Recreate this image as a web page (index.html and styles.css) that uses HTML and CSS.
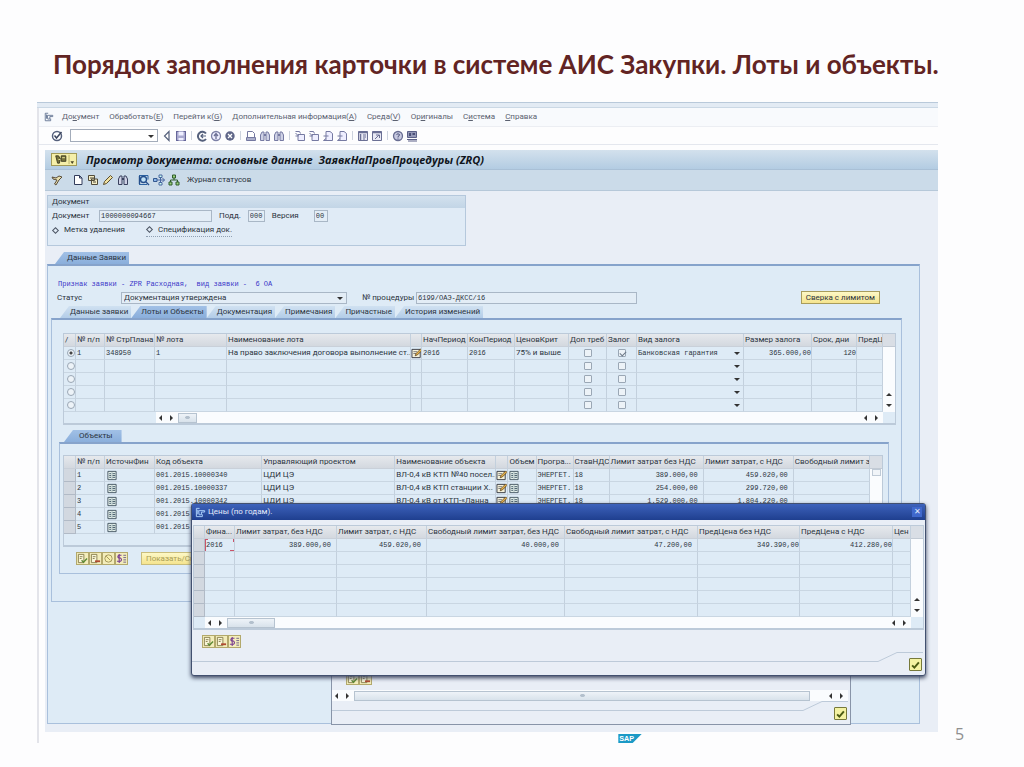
FILE: index.html
```html
<!DOCTYPE html>
<html lang="ru">
<head>
<meta charset="utf-8">
<meta name="viewport" content="width=device-width, initial-scale=1">
<title>Порядок заполнения карточки в системе АИС Закупки</title>
<link rel="stylesheet" href="styles.css">
</head>
<body>
<svg class="sprite" aria-hidden="true">
  <symbol id="i-menu" viewBox="0 0 12 12"><path d="M5 1.500H1.500V10.500H8V8M4 4h6.500v1.500H7v3H4.500zM3 3v5" fill="none" stroke="#596b8c"/></symbol>
  <symbol id="i-ok" viewBox="0 0 12 12"><circle cx="6" cy="6" r="4.500" fill="#fff" stroke="#55607c" stroke-width="1.500"/><path d="M3.500 5.500l2 2.500L10.500 2" fill="none" stroke="#3c4660" stroke-width="1.500"/></symbol>
  <symbol id="i-back" viewBox="0 0 12 12"><path d="M8 1.500v9L3.500 6z" fill="#fff" stroke="#55607c" stroke-width="1.200"/></symbol>
  <symbol id="i-save" viewBox="0 0 12 12"><rect x="1.500" y="1.500" width="9" height="9" fill="#a9a9cf" stroke="#66669a"/><path d="M3.500 1.500h5v4h-5zM3.500 8h5v2.500h-5z" fill="#eef"/></symbol>
  <symbol id="i-c1" viewBox="0 0 12 12"><path d="M10 3.500A4.500 4.500 0 1 0 10 9" fill="none" stroke="#55607c" stroke-width="2"/><path d="M5 6h5M7 4L5 6l2 2" fill="none" stroke="#55607c" stroke-width="1.200"/></symbol>
  <symbol id="i-c2" viewBox="0 0 12 12"><circle cx="6" cy="6" r="4.500" fill="#eef" stroke="#7c80a6" stroke-width="1.300"/><path d="M6 9V4M4 6l2-2.500L8 6" fill="none" stroke="#6c7094" stroke-width="1.300"/></symbol>
  <symbol id="i-c3" viewBox="0 0 12 12"><circle cx="6" cy="6" r="4.700" fill="#5f6688"/><path d="M4 4l4 4M8 4L4 8" stroke="#fff" stroke-width="1.300"/></symbol>
  <symbol id="i-print" viewBox="0 0 12 12"><path d="M2.500 7V1.500h5l2 2V7" fill="#fff" stroke="#7478a0"/><path d="M1.500 7.500h9v3h-9z" fill="#aaaeca" stroke="#7478a0"/></symbol>
  <symbol id="i-find" viewBox="0 0 12 12"><path d="M1.500 10.500V5l1.500-3h2v8.500zM7 10.500V2h2L10.500 5v5.500z" fill="#cfd2e6" stroke="currentColor"/><path d="M5 5h2" stroke="currentColor" stroke-width="2"/></symbol>
  <symbol id="i-pg1" viewBox="0 0 12 12"><path d="M4 4.500h6.500v6H4zM1.500 1.500h4l1 2M1.500 3l3 3M1.500 6h3" fill="#eef" stroke="#767aa2"/></symbol>
  <symbol id="i-pg2" viewBox="0 0 12 12"><path d="M4 1.500h4l2.500 2v7H4zM1.500 6h5M4 8.500L1.500 10.500h5" fill="#eef" stroke="#767aa2"/></symbol>
  <symbol id="i-win" viewBox="0 0 12 12"><path d="M1.500 1.500h9v9h-9z" fill="#e8e9f4" stroke="#6a6f94"/><path d="M1 2.500h10M3.500 4v6" stroke="#6a6f94" stroke-width="1.500"/><path d="M6 5h3M6 7h3M6 9h2" stroke="#6a6f94"/></symbol>
  <symbol id="i-win2" viewBox="0 0 12 12"><path d="M1.500 1.500h9v9h-9z" fill="#e8e9f4" stroke="#6a6f94"/><path d="M1 2.500h10" stroke="#6a6f94" stroke-width="1.500"/><path d="M4 9l4-4M5 5h3.500v3" fill="none" stroke="#6a6f94"/></symbol>
  <symbol id="i-help" viewBox="0 0 12 12"><circle cx="6" cy="6" r="4.500" fill="#c7c9e0" stroke="#686d92" stroke-width="1.300"/><path d="M4.500 4.500q1.500-1.500 3 0Q7.500 6 6 6.500v1M6 8.500v1" fill="none" stroke="#4b5078"/></symbol>
  <symbol id="i-mon" viewBox="0 0 12 12"><path d="M1.500 1.500h9v6h-9z" fill="#9599b8" stroke="#5c6188"/><path d="M3 3h2v3H3zM6.500 3h2.500v2H6.500z" fill="#4b5078"/><path d="M1 9.500h10M2 11h9" stroke="#5c6188" stroke-width="1.200"/></symbol>
  <symbol id="i-tool" viewBox="0 0 12 12"><path d="M1 3l4 1 3-2 3 1-3 3-3 5-1.500-1L6 6 2 5z" fill="#e7dfae" stroke="#5a4d3a"/></symbol>
  <symbol id="i-new" viewBox="0 0 12 12"><path d="M2.500 1.500h5l2.500 2.500v6.500H2.500zM7.500 1.500V4H10" fill="#fff" stroke="#333d5c"/></symbol>
  <symbol id="i-copy" viewBox="0 0 12 12"><path d="M1.500 1.500h6v5h-6zM4.500 5h6v5.500h-6z" fill="#f4edc6" stroke="#514b3a"/><path d="M3 4h5M6 8h3" stroke="#514b3a"/></symbol>
  <symbol id="i-pen" viewBox="0 0 12 12"><path d="M1.500 10.500l1-3L8.500 1.500l2 2L4.500 9.500z" fill="#efe0a0" stroke="#5b4d2c"/></symbol>
  <symbol id="i-zoom" viewBox="0 0 12 12"><path d="M1 1.500h9v4M1 10.500h8" fill="none" stroke="#2c62a0"/><circle cx="5.500" cy="5.500" r="3" fill="#bfe0f4" stroke="#254f8c" stroke-width="1.400"/><path d="M8 8l3 3M1.500 2v8" stroke="#254f8c" stroke-width="1.400"/></symbol>
  <symbol id="i-flow" viewBox="0 0 12 12"><path d="M.5 4.500h3.500v3H.5z" fill="#8db7ea" stroke="#34588f"/><path d="M6 1h3v2.500H6zM6 8.500h3V11H6z" fill="#cfe" stroke="#4867a0"/><path d="M4 6h7.500M9.500 4l2 2-2 2M7.500 3.500v5" fill="none" stroke="#4867a0"/></symbol>
  <symbol id="i-tree" viewBox="0 0 12 12"><path d="M4.500 1h3v3h-3zM1 8h3v3H1zM8 8h3v3H8z" fill="#9bd07b" stroke="#2f5d2c"/><path d="M6 4v2M2.500 8V6h7v2" fill="none" stroke="#2f5d2c"/></symbol>
  <symbol id="i-obj" viewBox="0 0 24 12"><path d="M3 2h3l2 3-1 5H5zM9 2h5v6H9z" fill="#76723a" stroke="#3b3a22"/><path d="M10 4h3M6 6h2" stroke="#eee9a0"/><path d="M17.500 1v10" stroke="#b5ac62"/><path d="M19 8h4l-2 3z" fill="#4a4527"/></symbol>
  <symbol id="i-edit" viewBox="0 0 12 12"><path d="M.5 1.500h9v9h-9z" fill="#f5f2dc" stroke="#33373f"/><path d="M2 4h4M2 6h3" stroke="#777"/><path d="M4 8.500l1-2.500 5-5 1.500 1.500-5 5z" fill="#e8b34a" stroke="#4f3a1b" stroke-width=".8"/></symbol>
  <symbol id="i-list" viewBox="0 0 12 12"><path d="M1.500 1.500h9v9h-9z" fill="#e3efea" stroke="#43535f"/><path d="M3 4h2M3 6h2M3 8h2M6.500 4h3M6.500 6h3M6.500 8h3" stroke="#3f5666"/><path d="M6 2v8" stroke="#879aa3" stroke-width=".6"/></symbol>
  <symbol id="i-b1" viewBox="0 0 12 12"><path d="M1.500 1.500h6v9h-6z" fill="#f9f6d8" stroke="#857d4d"/><path d="M3 4h3M3 6h2" stroke="#857d4d"/><path d="M5 8l2 2 4-4" fill="none" stroke="#5c8a34" stroke-width="1.500"/></symbol>
  <symbol id="i-b2" viewBox="0 0 12 12"><path d="M1.500 1.500h6v9h-6z" fill="#f9f6d8" stroke="#857d4d"/><path d="M3 4h3M3 6h2" stroke="#857d4d"/><path d="M5.500 9H11" stroke="#b04a30" stroke-width="2"/></symbol>
  <symbol id="i-b3" viewBox="0 0 12 12"><circle cx="6" cy="6" r="4" fill="#f6efae" stroke="#a0935a"/><path d="M3.500 3.500L8 8" stroke="#a0935a"/></symbol>
  <symbol id="i-b4" viewBox="0 0 12 12"><path d="M6 2.500H3q-2 1.500 0 3h2q2 2 0 3.500H1M3.500 1v10" fill="none" stroke="#7a3f91" stroke-width="1.200"/><path d="M8 2.500h3M8 5h3M8 7.500h3M8 10h3" stroke="#6b5c86"/></symbol>
  <symbol id="i-check" viewBox="0 0 12 12"><path d="M1.500 6.500l3 3 6-7" fill="none" stroke="#4b5a12" stroke-width="2.600"/></symbol>
  <symbol id="i-step" viewBox="0 0 48 10"><path d="M0 9.500h3L22 .5h26" fill="none" stroke="#bdcad9"/></symbol>
</svg>

<main class="slide">
  <h1>Порядок заполнения карточки в системе АИС Закупки. Лоты и объекты.</h1>

  <section class="sap">
    <div class="strip"></div>
    <nav class="menubar">
      <svg class="ic"><use href="#i-menu"/></svg>
      <button>До<u>к</u>умент</button><button>Обработать(<u>E</u>)</button><button>Перейти к(<u>G</u>)</button><button>Дополнительная информация(<u>A</u>)</button><button>Среда(<u>V</u>)</button><button>Ор<u>и</u>гиналы</button><button>С<u>и</u>стема</button><button><u>С</u>правка</button>
    </nav>
    <div class="toolbar">
      <button aria-label="Ввод"><svg class="ic"><use href="#i-ok"/></svg></button>
      <label class="drop cmd"><input type="text" aria-label="Команда"></label>
      <button aria-label="Назад"><svg class="ic"><use href="#i-back"/></svg></button>
      <button aria-label="Сохранить"><svg class="ic"><use href="#i-save"/></svg></button>
      <i class="sep"></i>
      <button aria-label="Возврат"><svg class="ic"><use href="#i-c1"/></svg></button>
      <button aria-label="Выход"><svg class="ic"><use href="#i-c2"/></svg></button>
      <button aria-label="Отмена"><svg class="ic"><use href="#i-c3"/></svg></button>
      <i class="sep"></i>
      <button aria-label="Печать"><svg class="ic"><use href="#i-print"/></svg></button>
      <button aria-label="Поиск"><svg class="ic lilac"><use href="#i-find"/></svg></button>
      <button aria-label="Искать далее"><svg class="ic lilac"><use href="#i-find"/></svg></button>
      <i class="sep"></i>
      <button aria-label="Первая страница"><svg class="ic"><use href="#i-pg1"/></svg></button>
      <button aria-label="Предыдущая"><svg class="ic"><use href="#i-pg1"/></svg></button>
      <button aria-label="Следующая"><svg class="ic"><use href="#i-pg2"/></svg></button>
      <button aria-label="Последняя"><svg class="ic"><use href="#i-pg2"/></svg></button>
      <i class="sep"></i>
      <button aria-label="Новый режим"><svg class="ic"><use href="#i-win"/></svg></button>
      <button aria-label="Ярлык"><svg class="ic"><use href="#i-win2"/></svg></button>
      <i class="sep"></i>
      <button aria-label="Справка"><svg class="ic"><use href="#i-help"/></svg></button>
      <button aria-label="Настройка"><svg class="ic"><use href="#i-mon"/></svg></button>
    </div>

    <div class="app">
      <header class="band">
        <button class="objbtn" aria-label="Услуги к объекту"><svg><use href="#i-obj"/></svg></button>
        <h2>Просмотр документа: основные данные &nbsp;ЗаявкНаПровПроцедуры (ZRQ)</h2>
      </header>
      <div class="appbar">
        <button aria-label="Просмотр / изменение"><svg class="ic"><use href="#i-tool"/></svg></button>
        <i class="sep"></i>
        <button aria-label="Создать"><svg class="ic"><use href="#i-new"/></svg></button>
        <button aria-label="Копировать"><svg class="ic"><use href="#i-copy"/></svg></button>
        <button aria-label="Изменить"><svg class="ic"><use href="#i-pen"/></svg></button>
        <button aria-label="Найти"><svg class="ic navy"><use href="#i-find"/></svg></button>
        <i class="sep"></i>
        <button aria-label="Просмотр"><svg class="ic"><use href="#i-zoom"/></svg></button>
        <button aria-label="Поток"><svg class="ic"><use href="#i-flow"/></svg></button>
        <button aria-label="Иерархия"><svg class="ic"><use href="#i-tree"/></svg></button>
        <button class="journal">Журнал статусов</button>
      </div>

      <div class="work">
        <section class="group">
          <h3>Документ</h3>
          <div class="line">
            <label for="doc" class="w-doc">Документ</label><input id="doc" class="fld f-doc" value="1000000094667" readonly>
            <label for="sub">Подд.</label><input id="sub" class="fld f-sub" value="000" readonly>
            <label for="ver" class="w-ver">Версия</label><input id="ver" class="fld f-ver" value="00" readonly>
          </div>
          <div class="line marks">
            <label><input type="checkbox" class="dia">Метка удаления</label>
            <label class="dotted"><input type="checkbox" class="dia">Спецификация док.</label>
          </div>
        </section>

        <div class="tabs outer"><button class="tab on">Данные Заявки</button></div>
        <section class="panel main">
          <p class="note">Признак заявки - ZPR Расходная, &nbsp;вид заявки - &nbsp;6 ОА</p>
          <div class="line status">
            <label for="st" class="w-st">Статус</label>
            <span class="drop f-st"><select id="st"><option>Документация утверждена</option></select></span>
            <label for="proc" class="w-proc">№ процедуры</label><input id="proc" class="fld f-proc" value="6199/ОАЭ-ДКСС/16" readonly>
            <button class="ybtn check-limit">Сверка с лимитом</button>
          </div>
          <div class="tabs inner">
            <button class="tab">Данные заявки</button><button class="tab on">Лоты и Объекты</button><button class="tab">Документация</button><button class="tab">Примечания</button><button class="tab">Причастные</button><button class="tab">История изменений</button>
          </div>
          <section class="panel lots">
            <div class="grid">
              <table class="t-lots">
                <colgroup><col><col><col><col><col><col><col><col><col><col><col><col><col><col><col></colgroup>
                <thead><tr><th>/</th><th>№ п/п</th><th>№ СтрПлана</th><th>№ лота</th><th>Наименование лота</th><th></th><th>НачПериод</th><th>КонПериод</th><th>ЦеновКрит</th><th>Доп треб</th><th>Залог</th><th>Вид залога</th><th>Размер залога</th><th>Срок, дни</th><th>ПредЦ</th></tr></thead>
                <tbody>
                  <tr><td><input type="radio" name="lot" aria-label="Лот 1" checked></td><td class="m">1</td><td class="m">348950</td><td class="m">1</td><td>На право заключения договора выполнение ст...</td><td class="i"><svg class="ic"><use href="#i-edit"/></svg></td><td class="m">2016</td><td class="m">2016</td><td>75% и выше</td><td class="c"><input type="checkbox" aria-label="Доп треб 1"></td><td class="c"><input type="checkbox" aria-label="Залог 1" checked></td><td class="m"><span class="drop"><select aria-label="Вид залога 1"><option>Банковская гарантия</option></select></span></td><td class="m r">365.000,00</td><td class="m r">120</td><td></td></tr>
                  <tr><td><input type="radio" name="lot" aria-label="Лот 2"></td><td></td><td></td><td></td><td></td><td></td><td></td><td></td><td></td><td class="c"><input type="checkbox" aria-label="Доп треб 2"></td><td class="c"><input type="checkbox" aria-label="Залог 2"></td><td><span class="drop"><select aria-label="Вид залога 2"><option></option></select></span></td><td></td><td></td><td></td></tr>
                  <tr><td><input type="radio" name="lot" aria-label="Лот 3"></td><td></td><td></td><td></td><td></td><td></td><td></td><td></td><td></td><td class="c"><input type="checkbox" aria-label="Доп треб 3"></td><td class="c"><input type="checkbox" aria-label="Залог 3"></td><td><span class="drop"><select aria-label="Вид залога 3"><option></option></select></span></td><td></td><td></td><td></td></tr>
                  <tr><td><input type="radio" name="lot" aria-label="Лот 4"></td><td></td><td></td><td></td><td></td><td></td><td></td><td></td><td></td><td class="c"><input type="checkbox" aria-label="Доп треб 4"></td><td class="c"><input type="checkbox" aria-label="Залог 4"></td><td><span class="drop"><select aria-label="Вид залога 4"><option></option></select></span></td><td></td><td></td><td></td></tr>
                  <tr><td><input type="radio" name="lot" aria-label="Лот 5"></td><td></td><td></td><td></td><td></td><td></td><td></td><td></td><td></td><td class="c"><input type="checkbox" aria-label="Доп треб 5"></td><td class="c"><input type="checkbox" aria-label="Залог 5"></td><td><span class="drop"><select aria-label="Вид залога 5"><option></option></select></span></td><td></td><td></td><td></td></tr>
                </tbody>
              </table>
              <div class="vs"><b class="cap"></b><b class="up"></b><b class="dn"></b></div>
              <div class="hs inset"><b class="lf"></b><b class="rt"></b><b class="thumb t-s"></b><b class="lf end"></b><b class="rt"></b></div>
            </div>

            <div class="tabs objs"><button class="tab on">Объекты</button></div>
            <section class="panel objects">
              <div class="grid">
                <table class="t-obj">
                  <colgroup><col><col><col><col><col><col><col><col><col><col><col><col><col></colgroup>
                  <thead><tr><th></th><th>№ п/п</th><th>ИсточнФин</th><th>Код объекта</th><th>Управляющий проектом</th><th>Наименование объекта</th><th></th><th>Объем</th><th>Програ...</th><th>СтавНДС</th><th>Лимит затрат без НДС</th><th>Лимит затрат, с НДС</th><th>Свободный лимит за</th></tr></thead>
                  <tbody>
                    <tr><th class="sel"></th><td class="m">1</td><td class="i2"><svg class="ic"><use href="#i-list"/></svg></td><td class="m">001.2015.10000340</td><td>ЦДИ ЦЭ</td><td>ВЛ-0,4 кВ КТП №40 посел...</td><td class="i"><svg class="ic"><use href="#i-edit"/></svg></td><td class="i"><svg class="ic"><use href="#i-list"/></svg></td><td class="m">ЭНЕРГЕТ.</td><td class="m">18</td><td class="m r p">389.000,00</td><td class="m r p">459.020,00</td><td></td></tr>
                    <tr><th class="sel"></th><td class="m">2</td><td class="i2"><svg class="ic"><use href="#i-list"/></svg></td><td class="m">001.2015.10000337</td><td>ЦДИ ЦЭ</td><td>ВЛ-0,4 кВ КТП станции Х..</td><td class="i"><svg class="ic"><use href="#i-edit"/></svg></td><td class="i"><svg class="ic"><use href="#i-list"/></svg></td><td class="m">ЭНЕРГЕТ.</td><td class="m">18</td><td class="m r p">254.000,00</td><td class="m r p">299.720,00</td><td></td></tr>
                    <tr><th class="sel"></th><td class="m">3</td><td class="i2"><svg class="ic"><use href="#i-list"/></svg></td><td class="m">001.2015.10000342</td><td>ЦДИ ЦЭ</td><td>ВЛ-0,4 кВ от КТП-«Ланна</td><td class="i"><svg class="ic"><use href="#i-edit"/></svg></td><td class="i"><svg class="ic"><use href="#i-list"/></svg></td><td class="m">ЭНЕРГЕТ.</td><td class="m">18</td><td class="m r p">1.529.000,00</td><td class="m r p">1.804.220,00</td><td></td></tr>
                    <tr><th class="sel"></th><td class="m">4</td><td class="i2"><svg class="ic"><use href="#i-list"/></svg></td><td class="m">001.2015</td><td></td><td></td><td></td><td></td><td></td><td></td><td></td><td></td><td></td></tr>
                    <tr><th class="sel"></th><td class="m">5</td><td class="i2"><svg class="ic"><use href="#i-list"/></svg></td><td class="m">001.2015</td><td></td><td></td><td></td><td></td><td></td><td></td><td></td><td></td><td></td></tr>
                  </tbody>
                </table>
                <div class="vs"><b class="cap"></b><b class="knob"></b><b class="up"></b><b class="dn"></b></div>
                <div class="hs blank"></div>
              </div>
              <div class="btns">
                <button class="sq" aria-label="Выделить все"><svg class="ic"><use href="#i-b1"/></svg></button><button class="sq" aria-label="Снять выделение"><svg class="ic"><use href="#i-b2"/></svg></button><button class="sq" aria-label="История"><svg class="ic"><use href="#i-b3"/></svg></button><button class="sq" aria-label="Цены"><svg class="ic"><use href="#i-b4"/></svg></button>
                <button class="ybtn dim">Показать/Ск</button>
              </div>
            </section>
          </section>
        </section>
      </div>
    </div>

    <footer class="foot">
      <svg class="logo" viewBox="0 0 26 10" role="img" aria-label="SAP"><path d="M0 0h26L16 10H0z" fill="#1c9ac6"/><text x="1" y="8">SAP</text></svg>
    </footer>

    <section class="dlg back">
      <div class="btns">
        <button class="sq" aria-label="Выделить все"><svg class="ic"><use href="#i-b1"/></svg></button><button class="sq" aria-label="Снять выделение"><svg class="ic"><use href="#i-b2"/></svg></button>
      </div>
      <div class="hs"><b class="lf"></b><b class="rt"></b><b class="thumb t-l"></b><b class="lf end"></b><b class="rt"></b></div>
      <div class="dfoot"><span class="rule"></span><svg class="step"><use href="#i-step"/></svg><button class="okbtn" aria-label="Далее"><svg><use href="#i-check"/></svg></button></div>
    </section>

    <section class="dlg front" role="dialog" aria-label="Цены (по годам)">
      <header><svg class="ic"><use href="#i-menu"/></svg><span>Цены (по годам).</span><button aria-label="Закрыть">✕</button></header>
      <div class="dbody">
        <div class="grid">
          <table class="t-price">
            <colgroup><col><col><col><col><col><col><col><col><col></colgroup>
            <thead><tr><th></th><th>Фина...</th><th>Лимит затрат, без НДС</th><th>Лимит затрат, с НДС</th><th>Свободный лимит затрат, без НДС</th><th>Свободный лимит затрат, с НДС</th><th>ПредЦена без НДС</th><th>ПредЦена с НДС</th><th>Цен</th></tr></thead>
            <tbody>
              <tr><th class="sel"></th><td class="m focus">2016</td><td class="m r p">389.000,00</td><td class="m r p">459.020,00</td><td class="m r p">40.000,00</td><td class="m r p">47.200,00</td><td class="m r">349.390,00</td><td class="m r">412.280,00</td><td></td></tr>
              <tr><th class="sel"></th><td></td><td></td><td></td><td></td><td></td><td></td><td></td><td></td></tr>
              <tr><th class="sel"></th><td></td><td></td><td></td><td></td><td></td><td></td><td></td><td></td></tr>
              <tr><th class="sel"></th><td></td><td></td><td></td><td></td><td></td><td></td><td></td><td></td></tr>
              <tr><th class="sel"></th><td></td><td></td><td></td><td></td><td></td><td></td><td></td><td></td></tr>
              <tr><th class="sel"></th><td></td><td></td><td></td><td></td><td></td><td></td><td></td><td></td></tr>
            </tbody>
          </table>
          <div class="vs"><b class="cap"></b><b class="up"></b><b class="dn"></b></div>
          <div class="hs near"><b class="lf"></b><b class="rt"></b><b class="thumb t-m"></b><b class="lf end"></b><b class="rt"></b></div>
        </div>
        <div class="btns">
          <button class="sq" aria-label="Выделить все"><svg class="ic"><use href="#i-b1"/></svg></button><button class="sq" aria-label="Снять выделение"><svg class="ic"><use href="#i-b2"/></svg></button><button class="sq" aria-label="Цены"><svg class="ic"><use href="#i-b4"/></svg></button>
        </div>
      </div>
      <div class="dfoot"><span class="rule"></span><svg class="step"><use href="#i-step"/></svg><button class="okbtn" aria-label="Далее"><svg><use href="#i-check"/></svg></button></div>
    </section>
  </section>

  <span class="num">5</span>
</main>
</body>
</html>
```
FILE: styles.css
```css
* { box-sizing: border-box; }
body { margin: 0; background: #fdfdfe; color: #2b3440; font: 8px/12px Roboto, "Noto Sans", sans-serif; }
button, input, select { font: inherit; color: inherit; margin: 0; padding: 0; border: 0; background: none; border-radius: 0; }
input, select { appearance: none; min-width: 0; }
h1, h2, h3, p { margin: 0; }
svg { display: block; flex: none; }
.sprite { position: absolute; width: 0; height: 0; }
.ic { width: 12px; height: 12px; }
.lilac { color: #767aa2; }
.navy { color: #39405e; }

.slide { display: grid; grid-template-columns: 37px 1fr 86px; grid-template-rows: auto auto; }
h1 { grid-column: 1 / -1; padding: 46px 20px 20px 53px; font: bold 26px/36px Lato, "Open Sans", sans-serif; color: #622423; white-space: nowrap; }
.num { grid-column: 3; align-self: end; padding-left: 17px; font: 16px/18px "Open Sans", sans-serif; color: #8f8f8f; }
.sap { grid-column: 2; position: relative; border-left: 2px solid #e3e4ea; background: #fdfdfe; }

/* Window chrome */
.strip { height: 6px; margin-left: -2px; border-top: 1px solid #b9c9da; border-bottom: 1px solid #cbd8e5; background: #e3ebf4; }
.menubar { display: flex; align-items: center; gap: 10px; height: 19px; padding-left: 5px; background: #f8fafd; border-bottom: 1px solid #eceef3; color: #5b6170; }
.menubar .ic { width: 10px; height: 10px; margin-right: -2px; }
.toolbar { display: flex; align-items: center; gap: 2px; height: 18px; padding-left: 12px; border-bottom: 1px solid #e4e7ee; }
.sep { width: 5px; height: 9px; background: linear-gradient(#cdd3de, #cdd3de) center / 1px 100% no-repeat; }
.drop { position: relative; display: flex; }
.drop > * { width: 100%; padding-right: 10px; }
.drop::after { content: ""; position: absolute; right: 3px; top: calc(50% - 1px); border: 3px solid transparent; border-top-color: #333; border-bottom: 0; pointer-events: none; }
.cmd { width: 88px; height: 13px; margin: 0 1px 0 5px; border: 1px solid #a3acba; background: #fff; }

.app { margin-left: 6px; margin-top: 5px; }
.band { display: flex; align-items: center; gap: 9px; height: 20px; padding-left: 6px; background: linear-gradient(#d3e1ed, #b3cce2); border-bottom: 1px solid #a9c0d6; }
.band h2 { font: italic bold 11px/16px "Open Sans", "Noto Sans", sans-serif; color: #10151c; white-space: nowrap; }
.objbtn { padding: 0; border: 1px solid #a19a58; background: #f5efa9; }
.objbtn svg { width: 24px; height: 11px; }
.appbar { display: flex; align-items: center; gap: 3px; height: 21px; padding-left: 6px; background: #cbdbe9; border-bottom: 1px solid #b6c8d9; }
.appbar .sep { width: 3px; background: none; }
.journal { padding-left: 4px; }

.work { padding: 4px 18px 8px 2px; background: #e9eef6; }
.group { width: 48%; height: 51px; border: 1px solid #b5c8dc; background: #e0ebf6; }
.group h3 { font: inherit; padding-left: 4px; line-height: 12px; background: linear-gradient(#d3e1ee, #c2d5e6); }
.line { display: flex; align-items: center; white-space: nowrap; }
.group .line { height: 14px; padding-left: 4px; gap: 7px; margin-top: 1px; }
.group .line + .line { margin-top: 0; }
.fld { height: 12px; padding: 0 1px; border: 1px solid #a9b7c6; background: #e3edf6; font: 7px/10px "Liberation Mono", monospace; }
.w-doc { width: 40px; } .f-doc { width: 113px; } .f-sub { width: 17px; } .f-ver { width: 14px; } .w-ver { width: 35px; }
.marks label { display: flex; align-items: center; gap: 6px; margin-right: 14px; }
.marks .dotted { border-bottom: 1px dotted #8f9fb2; }
.dia { width: 5px; height: 5px; margin-left: 1px; border: 1px solid #4d5665; transform: rotate(45deg); }

/* Tabs and their panels */
.tabs { display: flex; }
.tab { height: 12px; padding: 0 3px 0 10px; line-height: 12px; background: linear-gradient(#d0e1f1, #b3cde8); clip-path: polygon(9px 0, 100% 0, 100% 100%, 0 100%); white-space: nowrap; }
.tab.on { background: linear-gradient(#a1c0e6, #8aaedb); }
.outer { padding: 6px 0 0 8px; }
.outer .tab { padding-right: 3px; padding-left: 12px; }
.panel { border: 1px solid #a9c0dc; border-top: 2px solid #86a3cb; background: #deebf6; }
.main { padding: 11px 17px 121px 3px; }
.note { padding-left: 7px; font: 7px/14px "Liberation Mono", monospace; color: #3a35c8; white-space: pre; }
.status { height: 13px; padding-left: 6px; }
.w-st { width: 64px; }
.w-proc { width: 50px; }
.f-st { width: 226px; height: 12px; margin-right: 15px; border: 1px solid #a9b7c6; background: #e3edf6; }
.f-st select { padding-left: 2px; line-height: 10px; }
.f-proc { flex: 0 1 221px; margin-left: 4px; }
.ybtn { height: 13px; padding: 0 4px; line-height: 11px; border: 1px solid #a89c5c; background: linear-gradient(#fdf8c6, #f5e48e); white-space: nowrap; }
.check-limit { min-width: 74px; margin-left: auto; margin-right: 22px; }
.dim { width: 60px; color: #a99d55; border-color: #c9bd7c; text-align: left; overflow: hidden; }
.inner { padding: 2px 0 0 9px; }
.lots { padding: 13px 5px 27px 11px; }
.objs { padding: 5px 0 0 1px; }
.objs .tab { padding-right: 9px; padding-left: 15px; }
.objects { margin: 0 7px 0 -4px; padding: 11px 5px 8px 3px; }

/* Table controls */
.grid { display: grid; grid-template-columns: minmax(0, 1fr) 12px; border: 1px solid #bccad9; border-bottom-width: 2px; background: #deebf6; }
table { width: 100%; border-collapse: separate; border-spacing: 0; table-layout: fixed; }
th, td { height: 13px; padding: 0 0 0 1px; line-height: 12px; text-align: left; font-weight: normal; white-space: nowrap; overflow: hidden; border-right: 1px solid #c3d0dd; border-bottom: 1px solid #c9d6e2; }
thead th { padding-left: 1px; background: linear-gradient(#e6e9ed, #d3d8df); border-bottom-color: #c9d0d9; }
.sel { background: #d2d8e0; border-color: #b1bac6; }
.m { font: 7px/12px "Liberation Mono", monospace; }
.r { text-align: right; }
.p { padding-right: 5px; }
.c { text-align: center; }
.i, .i2 { padding: 0; }
.i2 { padding-left: 1px; }
.i .ic, .i2 .ic { height: 11px; }
td input { display: block; width: 8px; height: 8px; border: 1px solid #9aa7b5; background: #edf3f8; }
td.c input { margin: 0 auto; border-radius: 1px; }
td input[type=radio] { border-radius: 50%; margin-left: 2px; }
td input[type=radio]:checked { background: radial-gradient(#444 1px, #edf3f8 2px); }
td input[type=checkbox]:checked::after { content: ""; display: block; width: 5px; height: 3px; margin: 1px 0 0 1px; border: solid #6d7988; border-width: 0 0 1px 1px; transform: rotate(-45deg); }
td .drop select { height: 12px; line-height: 12px; }
.focus { background: linear-gradient(#c9546a, #c9546a) 0 0 / 3px 1px, linear-gradient(#c9546a, #c9546a) 0 0 / 1px 100%, linear-gradient(#c9546a, #c9546a) 100% 100% / 4px 1px, linear-gradient(#c9546a, #c9546a) 100% 0 / 1px 3px; background-repeat: no-repeat; }
.t-lots col:nth-child(1) { width: 12px; } .t-lots col:nth-child(2) { width: 29px; } .t-lots col:nth-child(3) { width: 50px; }
.t-lots col:nth-child(4) { width: 72px; } .t-lots col:nth-child(5) { width: 184px; } .t-lots col:nth-child(6) { width: 11px; }
.t-lots col:nth-child(7) { width: 46px; } .t-lots col:nth-child(8) { width: 47px; } .t-lots col:nth-child(9) { width: 54px; }
.t-lots col:nth-child(10) { width: 38px; } .t-lots col:nth-child(11) { width: 30px; } .t-lots col:nth-child(12) { width: 107px; }
.t-lots col:nth-child(13) { width: 68px; } .t-lots col:nth-child(14) { width: 45px; } .t-lots col:nth-child(15) { width: 26px; }
.t-obj col:nth-child(1) { width: 12px; } .t-obj col:nth-child(2) { width: 29px; } .t-obj col:nth-child(3) { width: 50px; }
.t-obj col:nth-child(4) { width: 107px; } .t-obj col:nth-child(5) { width: 133px; } .t-obj col:nth-child(6) { width: 101px; }
.t-obj col:nth-child(7) { width: 12px; } .t-obj col:nth-child(8) { width: 28px; } .t-obj col:nth-child(9) { width: 37px; }
.t-obj col:nth-child(10) { width: 36px; } .t-obj col:nth-child(11) { width: 94px; } .t-obj col:nth-child(12) { width: 90px; }
.t-obj col:nth-child(13) { width: 76px; }
.t-price col:nth-child(1) { width: 11px; } .t-price col:nth-child(2) { width: 30px; } .t-price col:nth-child(3) { width: 102px; }
.t-price col:nth-child(4) { width: 90px; } .t-price col:nth-child(5) { width: 138px; } .t-price col:nth-child(6) { width: 133px; }
.t-price col:nth-child(7) { width: 102px; } .t-price col:nth-child(8) { width: 93px; } .t-price col:nth-child(9) { width: 18px; }

/* Scroll bars */
.vs { display: flex; flex-direction: column; align-items: center; background: #fafcfe; }
.vs .cap { width: 100%; height: 13px; background: #d9dee5; border-bottom: 1px solid #c2cad4; }
.vs .knob { width: 9px; height: 7px; border: 1px solid #bfcad6; background: #f0f4f8; }
.up, .dn { border: 3px solid transparent; }
.up { margin-top: auto; border-top: 0; border-bottom-color: #333; }
.dn { margin: 8px 0 5px; border-bottom: 0; border-top-color: #333; }
.hs { display: flex; align-items: center; height: 11px; background: #fafcfe; }
.lf, .rt { border: 3px solid transparent; }
.lf { margin-left: 3px; border-left: 0; border-right-color: #333; }
.rt { margin: 0 5px 0 8px; border-right: 0; border-left-color: #333; }
.end { margin-left: auto; }
.inset { margin-left: 92px; }
.near { margin-left: 11px; }
.blank { height: 11px; background: #deebf6; grid-column: 1 / -1; }
.thumb { height: 10px; border: 1px solid #b6c3d0; background: radial-gradient(#b3c0cd 2px, transparent 3px) center / 9px 5px no-repeat, linear-gradient(#eef3f8, #d8e2eb); }
.t-s { width: 19px; } .t-m { width: 48px; } .t-l { flex: 0 1 456px; }
.btns { display: flex; }
.sq { width: 13px; height: 13px; border: 1px solid #b3a96c; background: #f3edbb; }
.sq .ic { width: 11px; height: 11px; }
.objects .btns { padding: 5px 0 0 13px; }
.objects .dim { margin-left: 13px; }

/* Dialogs over the form */
.dlg { position: absolute; background: #e9eef6; border: 1px solid #8894a8; }
.front { left: 152px; right: 12px; top: 401px; border-color: #42506f; border-radius: 3px; box-shadow: 0 2px 4px #3c455f; }
.front header { display: flex; align-items: center; gap: 2px; height: 16px; padding: 0 3px; color: #e3eafa; background: linear-gradient(#3d62bb, #1f3f8f); }
.front header .ic { width: 11px; height: 11px; filter: brightness(2); }
.front header button { margin-left: auto; width: 10px; height: 10px; line-height: 10px; background: #3f68cc; }
.dbody { padding: 5px 1px 0; }
.dbody .btns { padding: 5px 0 0 9px; }
.back { left: 292px; right: 87px; bottom: 18px; }
.back .btns { padding: 30px 0 5px 14px; }
.back .hs { margin-right: 2px; }
.dfoot { display: flex; align-items: flex-start; height: 23px; padding-right: 3px; }
.front .dfoot { margin-top: 4px; }
.rule { flex: 1; height: 1px; margin-top: 9px; background: #bdcad9; }
.step { width: 48px; height: 10px; }
.okbtn { width: 13px; height: 13px; margin: 6px 0 0 -14px; padding: 0 1px; border: 1px solid #77793a; background: #f4f2a2; border-radius: 1px; }
.okbtn svg { width: 9px; height: 10px; }

.foot { height: 11px; padding: 2px 0 0 64%; }
.logo { width: 26px; height: 9px; margin-left: 3px; }
.logo text { font: bold 8px "Liberation Sans", sans-serif; fill: #fff; }
```
